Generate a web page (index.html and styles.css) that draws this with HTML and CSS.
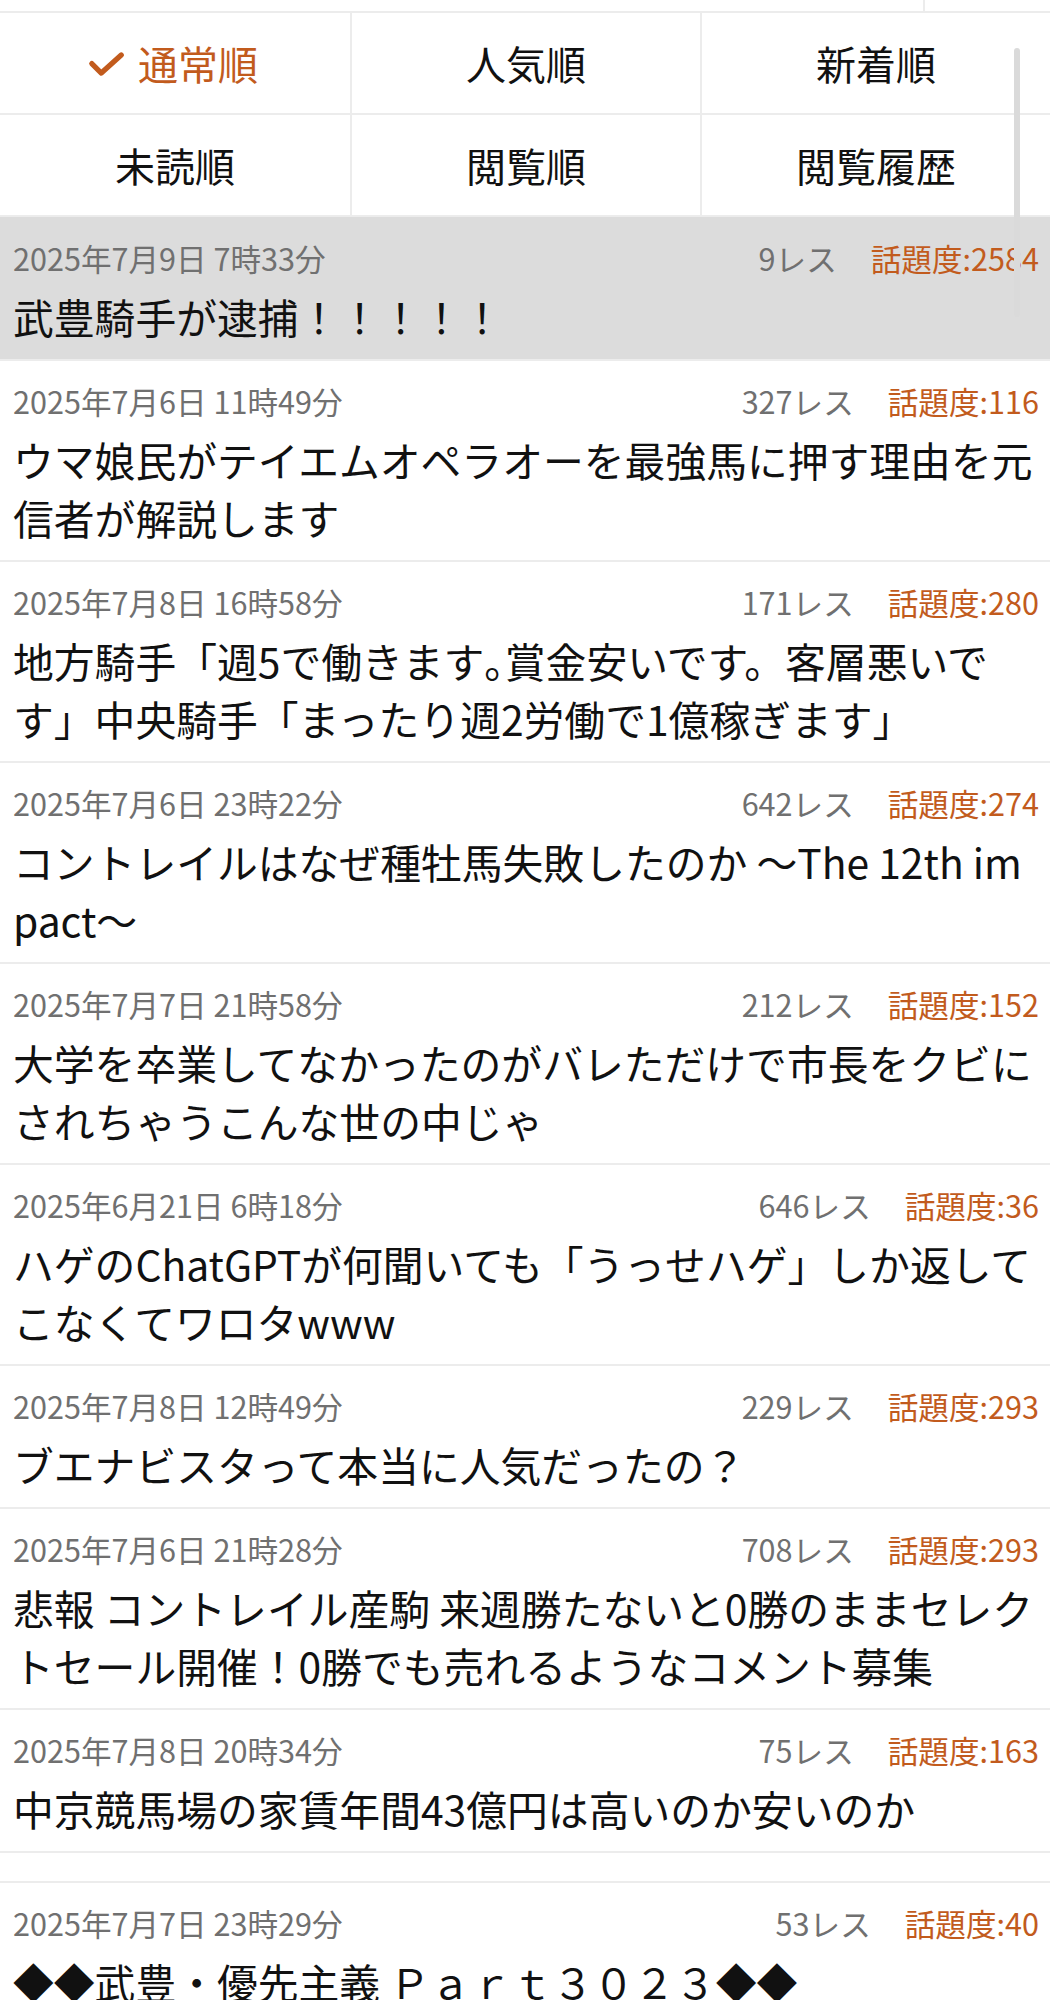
FILE: index.html
```html
<!DOCTYPE html>
<html lang="ja">
<head>
<meta charset="utf-8">
<title>スレッド一覧</title>
<link rel="stylesheet" href="styles.css">
</head>
<body>
<div class="page">
  <div class="prev-strip">
    <div class="prev-cell"></div>
    <div class="prev-cell last"></div>
  </div>
  <div class="sort-grid">
    <div class="sort-tab active">
      <svg class="check" viewBox="0 0 40 28" width="38" height="27"><polyline points="4,13 14,23 35,4" fill="none" stroke="#c25b1d" stroke-width="5.5" stroke-linecap="round" stroke-linejoin="round"/></svg>
      <span>通常順</span>
    </div>
    <div class="sort-tab"><span>人気順</span></div>
    <div class="sort-tab"><span>新着順</span></div>
    <div class="sort-tab"><span>未読順</span></div>
    <div class="sort-tab"><span>閲覧順</span></div>
    <div class="sort-tab"><span>閲覧履歴</span></div>
  </div>

  <ul class="threads">
    <li class="thread current">
      <div class="meta"><span class="date">2025年7月9日 7時33分</span><span class="res">9レス</span><span class="score">話題度:2584</span></div>
      <div class="title">武豊騎手が逮捕！！！！！</div>
    </li>
    <li class="thread">
      <div class="meta"><span class="date">2025年7月6日 11時49分</span><span class="res">327レス</span><span class="score">話題度:116</span></div>
      <div class="title">ウマ娘民がテイエムオペラオーを最強馬に押す理由を元信者が解説します</div>
    </li>
    <li class="thread">
      <div class="meta"><span class="date">2025年7月8日 16時58分</span><span class="res">171レス</span><span class="score">話題度:280</span></div>
      <div class="title">地方騎手「週5で働きます｡賞金安いです。客層悪いです」中央騎手「まったり週2労働で1億稼ぎます」</div>
    </li>
    <li class="thread">
      <div class="meta"><span class="date">2025年7月6日 23時22分</span><span class="res">642レス</span><span class="score">話題度:274</span></div>
      <div class="title">コントレイルはなぜ種牡馬失敗したのか 〜The 12th impact〜</div>
    </li>
    <li class="thread">
      <div class="meta"><span class="date">2025年7月7日 21時58分</span><span class="res">212レス</span><span class="score">話題度:152</span></div>
      <div class="title">大学を卒業してなかったのがバレただけで市長をクビにされちゃうこんな世の中じゃ</div>
    </li>
    <li class="thread">
      <div class="meta"><span class="date">2025年6月21日 6時18分</span><span class="res">646レス</span><span class="score">話題度:36</span></div>
      <div class="title">ハゲのChatGPTが何聞いても「うっせハゲ」しか返してこなくてワロタwww</div>
    </li>
    <li class="thread">
      <div class="meta"><span class="date">2025年7月8日 12時49分</span><span class="res">229レス</span><span class="score">話題度:293</span></div>
      <div class="title">ブエナビスタって本当に人気だったの？</div>
    </li>
    <li class="thread">
      <div class="meta"><span class="date">2025年7月6日 21時28分</span><span class="res">708レス</span><span class="score">話題度:293</span></div>
      <div class="title">悲報 コントレイル産駒 来週勝たないと0勝のままセレクトセール開催！0勝でも売れるようなコメント募集</div>
    </li>
    <li class="thread">
      <div class="meta"><span class="date">2025年7月8日 20時34分</span><span class="res">75レス</span><span class="score">話題度:163</span></div>
      <div class="title">中京競馬場の家賃年間43億円は高いのか安いのか</div>
    </li>
    <li class="spacer"></li>
    <li class="thread">
      <div class="meta"><span class="date">2025年7月7日 23時29分</span><span class="res">53レス</span><span class="score">話題度:40</span></div>
      <div class="title">◆◆武豊・優先主義 Ｐａｒｔ３０２３◆◆</div>
    </li>
  </ul>

  <div class="scrollbar"></div>
</div>
</body>
</html>
```

FILE: styles.css
```css
* {
  box-sizing: border-box;
}

html, body {
  margin: 0;
  padding: 0;
  background: #ffffff;
}

body {
  font-family: "Noto Sans CJK JP", "Noto Sans", sans-serif;
  color: #111111;
}

.page {
  position: relative;
  width: 1050px;
  overflow: hidden;
}

.prev-strip {
  display: flex;
  height: 13px;
  border-bottom: 2px solid #ececec;
}

.prev-cell {
  width: 925px;
  border-right: 2px solid #ececec;
}

.prev-cell.last {
  flex: 1;
  border-right: none;
}

.sort-grid {
  display: grid;
  grid-template-columns: 352px 350px 1fr;
  border-bottom: 2px solid #ececec;
}

.sort-tab {
  height: 102px;
  display: flex;
  align-items: center;
  justify-content: center;
  gap: 12px;
  font-size: 40px;
  line-height: 1;
  color: #111111;
  border-right: 2px solid #ececec;
  border-bottom: 2px solid #ececec;
}

.sort-tab:nth-child(3n) {
  border-right: none;
}

.sort-tab:nth-child(n+4) {
  border-bottom: none;
  height: 100px;
}

.sort-tab.active {
  color: #c25b1d;
}

.sort-tab.active span {
  margin-right: 4px;
}

.check {
  display: block;
  margin-top: 2px;
}

.threads {
  list-style: none;
  margin: 0;
  padding: 0;
}

.thread {
  padding: 19px 11px 13px 13px;
  border-bottom: 2px solid #ececec;
}

.thread.current {
  background: #dcdcdc;
  padding-top: 20px;
  padding-bottom: 13px;
}

.spacer {
  height: 30px;
  border-bottom: 2px solid #ececec;
}

.meta {
  display: flex;
  align-items: baseline;
  font-size: 30.6px;
  line-height: 43px;
  height: 43px;
  white-space: nowrap;
}

.date {
  color: #707070;
  flex: 1;
}

.res {
  color: #707070;
}

.score {
  color: #c25b1d;
  margin-left: 34px;
}

.title {
  margin-top: 8px;
  font-size: 40.8px;
  line-height: 58px;
  color: #111111;
  word-break: break-all;
}

.scrollbar {
  position: absolute;
  left: 1014px;
  top: 48px;
  width: 6px;
  height: 269px;
  border-radius: 3px;
  background: #dadada;
}
```
